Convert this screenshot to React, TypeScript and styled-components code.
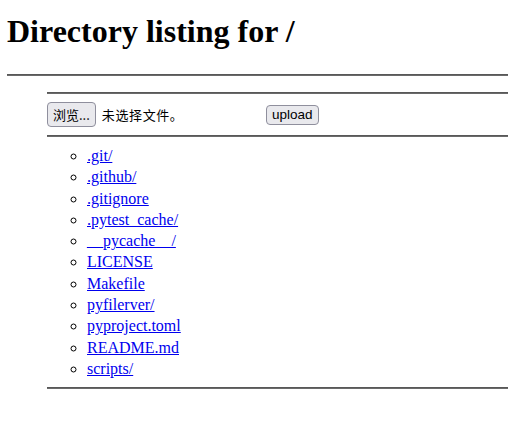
import React from 'react';
import styled, { createGlobalStyle } from 'styled-components';

const GlobalStyle = createGlobalStyle`
  html, body {
    margin: 0;
    padding: 0;
    background: #fff;
  }
  body {
    font-family: "Liberation Serif", "Times New Roman", serif;
    font-size: 16px;
    color: #000;
  }
`;

const Page = styled.div`
  padding-left: 7px;
`;

const Title = styled.h1`
  font-size: 32px;
  font-weight: bold;
  line-height: 43px;
  margin: 10px 0 21px 0;
`;

const Rule = styled.hr`
  border: none;
  border-top: 1px solid #585858;
  border-bottom: 1px solid #6a6a6a;
  height: 0;
  margin: 8px 0;
`;

const TopRule = styled(Rule)`
  margin: 0;
`;

const Outer = styled.ul`
  list-style: none;
  margin: 16px 0 0 0;
  padding-left: 40px;
`;

const UploadForm = styled.form`
  display: flex;
  align-items: center;
  height: 25px;
  gap: 4px;
`;

const FilePicker = styled.div`
  display: flex;
  align-items: center;
  gap: 6px;
  width: 215px;
`;

const Button = styled.button<{ cjk?: boolean }>`
  box-sizing: border-box;
  height: ${p => (p.cjk ? '25px' : '20px')};
  padding: 0 5px;
  font-family: ${p =>
    p.cjk
      ? '"Noto Sans CJK SC", "Liberation Sans", sans-serif'
      : '"Liberation Sans", Arial, sans-serif'};
  font-size: ${p => (p.cjk ? '13px' : '13.5px')};
  color: #000;
  background: #e9e9ed;
  border: 1px solid #8f8f9d;
  border-radius: 4px;
  line-height: 1;
`;

const FileName = styled.span`
  font-family: "Noto Sans CJK SC", "Liberation Sans", sans-serif;
  font-size: 13px;
  letter-spacing: 0.6px;
  white-space: nowrap;
`;

const Files = styled.ul`
  list-style-type: circle;
  margin: 0;
  padding-left: 40px;
`;

const Item = styled.li`
  line-height: 21.3px;
`;

const FileLink = styled.a`
  color: #0000ee;
  text-decoration: underline;
`;

const entries = [
  '.git/',
  '.github/',
  '.gitignore',
  '.pytest_cache/',
  '__pycache__/',
  'LICENSE',
  'Makefile',
  'pyfilerver/',
  'pyproject.toml',
  'README.md',
  'scripts/',
];

export default function App() {
  return (
    <Page>
      <GlobalStyle />
      <Title>Directory listing for /</Title>
      <TopRule />
      <Outer>
        <Rule />
        <UploadForm onSubmit={e => e.preventDefault()}>
          <FilePicker>
            <Button type="button" cjk>浏览...</Button>
            <FileName>未选择文件。</FileName>
          </FilePicker>
          <Button type="submit">upload</Button>
        </UploadForm>
        <Rule />
        <Files>
          {entries.map(name => (
            <Item key={name}>
              <FileLink href={name}>{name}</FileLink>
            </Item>
          ))}
        </Files>
        <Rule />
      </Outer>
    </Page>
  );
}
